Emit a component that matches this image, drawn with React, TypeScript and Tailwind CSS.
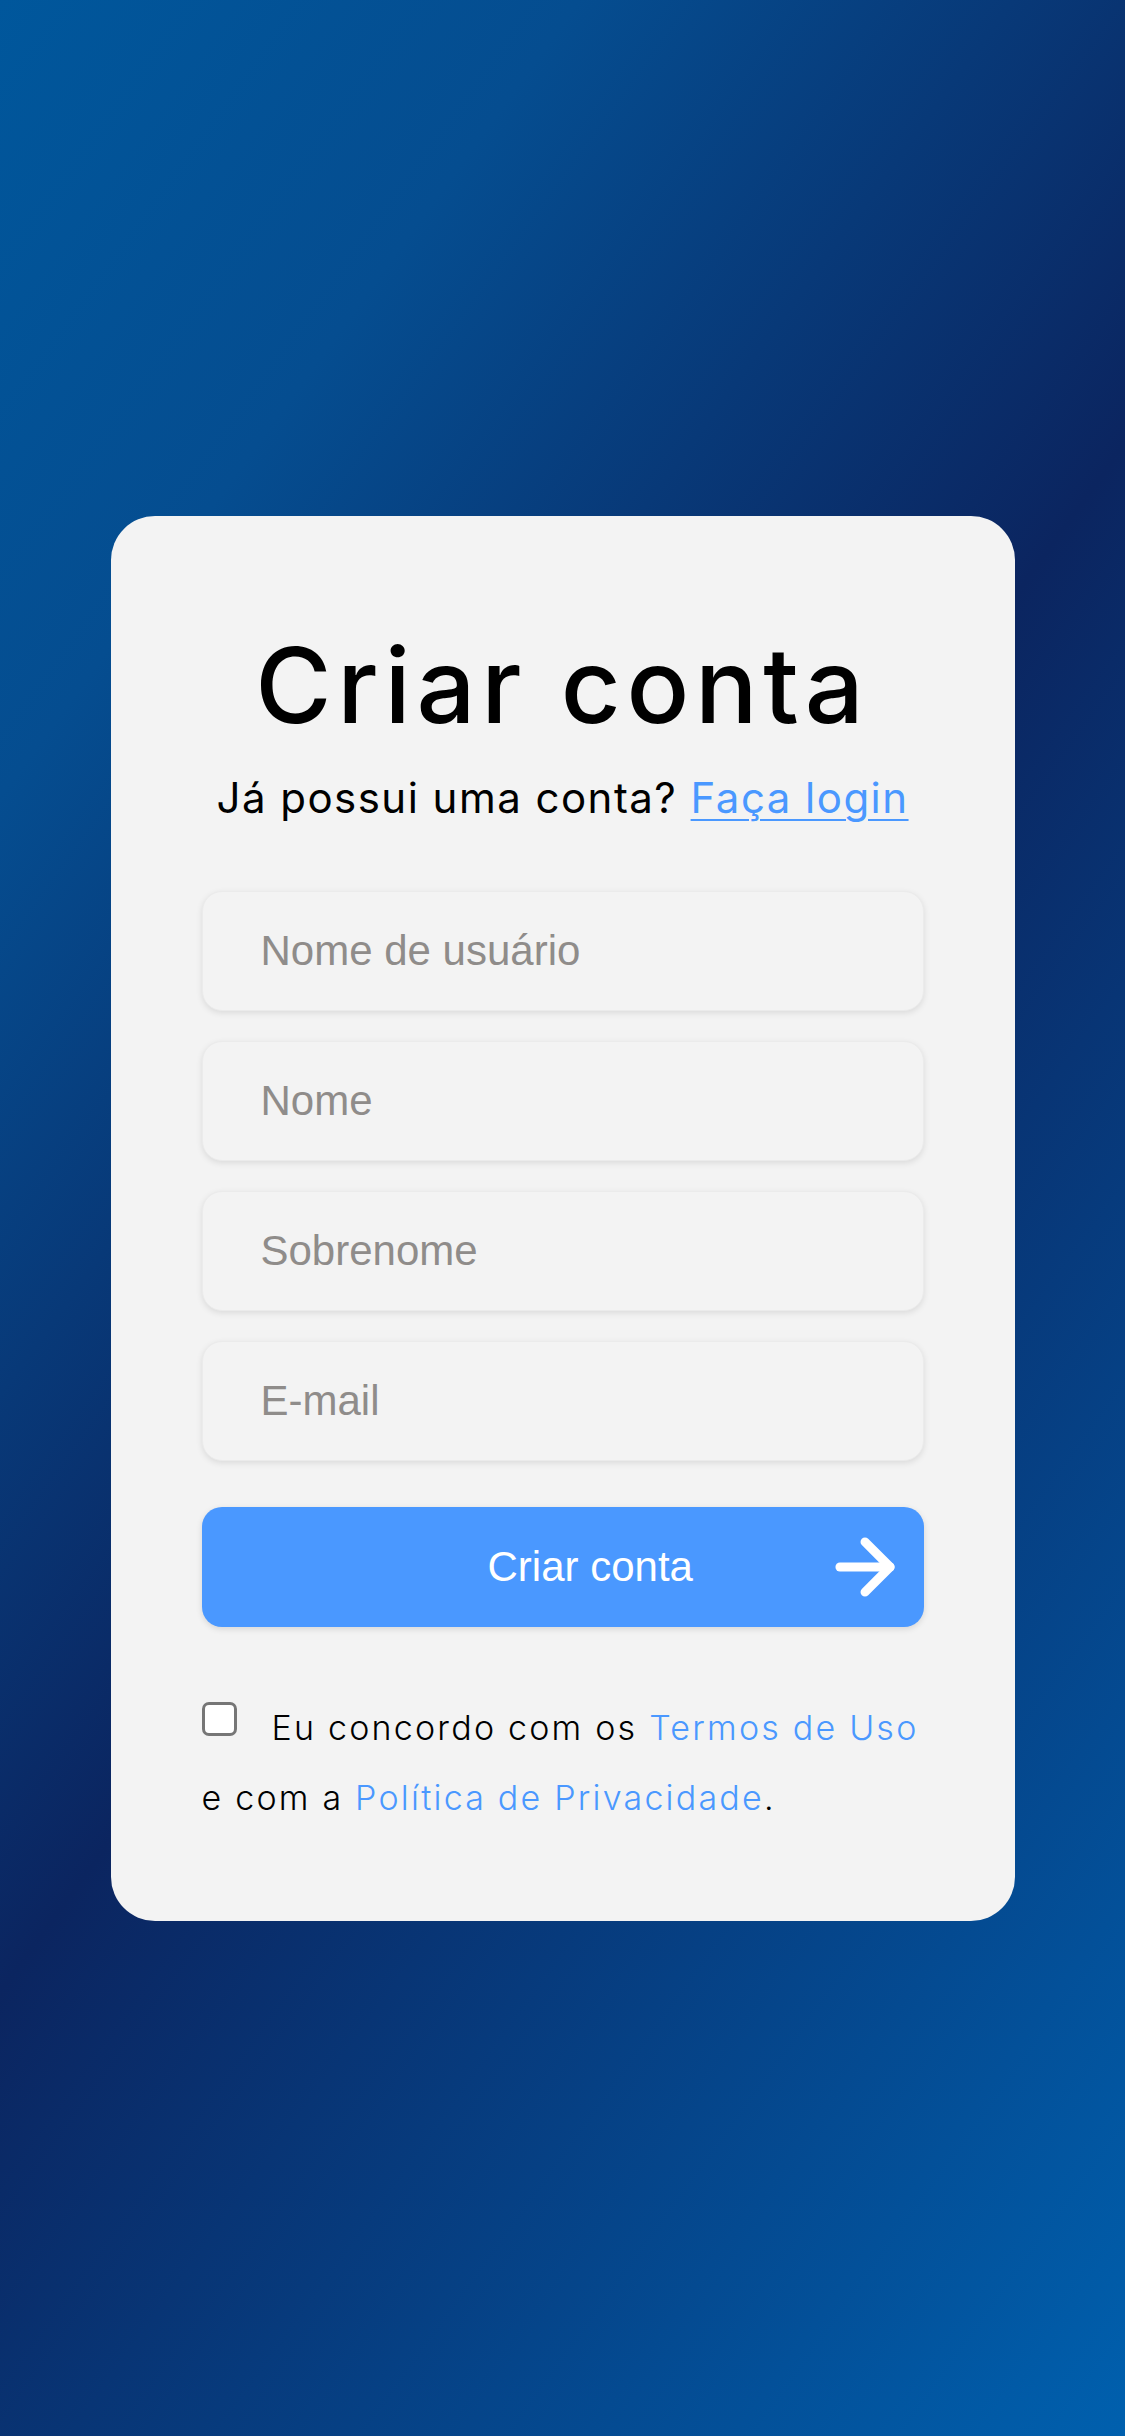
import { ArrowRight } from "lucide-react";
import React from "react";

const fields = ["Nome de usuário", "Nome", "Sobrenome", "E-mail"];

function App() {
  return (
    <div className="min-h-screen w-full flex items-center justify-center bg-[linear-gradient(126deg,#00579c_0%,#054d90_20%,#0b2560_50%,#0060ae_100%)]">
      {/* Card */}
      <div className="w-[904px] rounded-[44px] bg-[#f3f3f3] pt-[117px] pb-[88px] px-[91px] font-['Inter',sans-serif]">
        <h1 className="text-center text-[104px] leading-none font-medium text-black tracking-[0.055em]">
          Criar conta
        </h1>
        <p className="mt-[40px] text-center text-[42px] leading-none text-black tracking-[0.035em]">
          Já possui uma conta?{" "}
          <a href="#" className="text-[#4a98ff] underline underline-offset-[6px] decoration-2">
            Faça login
          </a>
        </p>

        {/* Inputs */}
        <div className="mt-[72px] flex flex-col gap-[30px]">
          {fields.map((f) => (
            <input
              key={f}
              placeholder={f}
              className="h-[120px] w-full rounded-[20px] bg-[#f3f3f3] pl-[58px] text-[42px] font-['Liberation_Sans',Arial,sans-serif] text-black placeholder:text-[#8f8c8a] outline-none border border-[#ebebeb] shadow-[0_2px_6px_rgba(0,0,0,0.1)]"
            />
          ))}
        </div>

        {/* Button */}
        <button className="mt-[46px] h-[120px] w-full rounded-[20px] bg-[#4a98ff] flex items-center pl-[286px] pr-[16px] text-white text-[42px] font-['Liberation_Sans',Arial,sans-serif] shadow-[0_2px_6px_rgba(0,0,0,0.12)]">
          <span>Criar conta</span>
          <ArrowRight className="ml-auto" size={86} strokeWidth={2.5} />
        </button>

        {/* Terms */}
        <p className="mt-[66px] text-[34px] leading-[70px] font-light text-black tracking-[0.065em] whitespace-nowrap">
          <span className="inline-block w-[35px] h-[34px] mb-[4px] mr-[35px] rounded-[7px] border-[3px] border-[#767676] bg-white align-baseline" />
          Eu concordo com os <a href="#" className="text-[#4a98ff]">Termos de Uso</a>
          <br />
          e com a <a href="#" className="text-[#4a98ff]">Política de Privacidade</a>.
        </p>
      </div>
    </div>
  );
}

export default App;
